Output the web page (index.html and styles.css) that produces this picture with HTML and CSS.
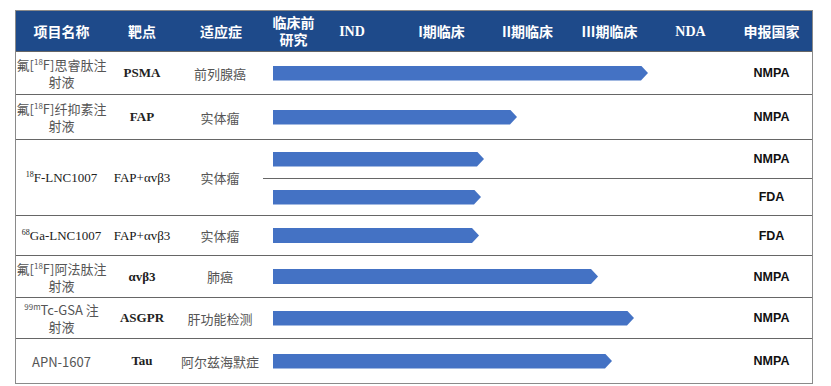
FILE: index.html
```html
<!DOCTYPE html>
<html lang="zh">
<head>
<meta charset="utf-8">
<link rel="stylesheet" href="styles.css">
</head>
<body>
<div class="table">
  <div class="head">
    <div class="h h1">项目名称</div>
    <div class="h h2">靶点</div>
    <div class="h h3">适应症</div>
    <div class="h p0"><span>临床前<br>研究</span></div>
    <div class="h p1 serif">IND</div>
    <div class="h p2">I期临床</div>
    <div class="h p3">II期临床</div>
    <div class="h p4">III期临床</div>
    <div class="h p5 serif">NDA</div>
    <div class="h h5">申报国家</div>
  </div>

  <div class="row r1">
    <div class="c c1 name"><span>氟[<sup>18</sup>F]思睿肽注<br>射液</span></div>
    <div class="c c2 tgt b">PSMA</div>
    <div class="c c3 ind">前列腺癌</div>
    <div class="prog"><div class="bar" style="width:375px"></div></div>
    <div class="c c5 ctry">NMPA</div>
  </div>

  <div class="row r2">
    <div class="c c1 name"><span>氟[<sup>18</sup>F]纤抑素注<br>射液</span></div>
    <div class="c c2 tgt b">FAP</div>
    <div class="c c3 ind">实体瘤</div>
    <div class="prog"><div class="bar" style="width:244px"></div></div>
    <div class="c c5 ctry">NMPA</div>
  </div>

  <div class="row r3">
    <div class="c c1 name serifname"><span><sup>18</sup>F-LNC1007</span></div>
    <div class="c c2 tgt">FAP+αvβ3</div>
    <div class="c c3 ind">实体瘤</div>
    <div class="split">
      <div class="sub">
        <div class="prog"><div class="bar" style="width:211px"></div></div>
        <div class="c c5 ctry">NMPA</div>
      </div>
      <div class="sub sub2">
        <div class="prog"><div class="bar" style="width:208px"></div></div>
        <div class="c c5 ctry">FDA</div>
      </div>
    </div>
  </div>

  <div class="row r4">
    <div class="c c1 name serifname"><span><sup>68</sup>Ga-LNC1007</span></div>
    <div class="c c2 tgt">FAP+αvβ3</div>
    <div class="c c3 ind">实体瘤</div>
    <div class="prog"><div class="bar" style="width:206px"></div></div>
    <div class="c c5 ctry">FDA</div>
  </div>

  <div class="row r5">
    <div class="c c1 name"><span>氟[<sup>18</sup>F]阿法肽注<br>射液</span></div>
    <div class="c c2 tgt b">αvβ3</div>
    <div class="c c3 ind">肺癌</div>
    <div class="prog"><div class="bar" style="width:325px"></div></div>
    <div class="c c5 ctry">NMPA</div>
  </div>

  <div class="row r6">
    <div class="c c1 name"><span><sup>99m</sup>Tc-GSA 注<br>射液</span></div>
    <div class="c c2 tgt b">ASGPR</div>
    <div class="c c3 ind">肝功能检测</div>
    <div class="prog"><div class="bar" style="width:361px"></div></div>
    <div class="c c5 ctry">NMPA</div>
  </div>

  <div class="row r7">
    <div class="c c1 name">APN-1607</div>
    <div class="c c2 tgt b">Tau</div>
    <div class="c c3 ind">阿尔兹海默症</div>
    <div class="prog"><div class="bar" style="width:339px"></div></div>
    <div class="c c5 ctry">NMPA</div>
  </div>
</div>
</body>
</html>
```

FILE: styles.css
```css
* { box-sizing: border-box; }
html, body { margin: 0; padding: 0; background: #fff; }
body { font-family: "Noto Sans CJK SC", "Noto Sans", sans-serif; }

.table {
  margin: 10px 0 0 15px;
  width: 798px;
  border: 1px solid #8a8a8a;
  display: flex;
  flex-direction: column;
}

.head {
  display: flex;
  height: 40px;
  background: #1e4a8a;
  color: #fff;
  font-weight: 700;
  font-size: 14px;
  line-height: 17px;
}
.h {
  display: flex;
  align-items: center;
  justify-content: center;
  text-align: center;
}
.h1 { width: 91px; }
.h2 { width: 70px; }
.h3 { width: 88px; }
.p0 { width: 57px; }
.p1 { width: 75px; padding-right: 15px; }
.p2 { width: 89px; }
.p3 { width: 83px; }
.p4 { width: 81px; }
.p5 { width: 81px; }
.h5 { width: 81px; }
.serif { font-family: "Liberation Serif", serif; font-size: 14px; }

.row {
  display: flex;
  border-top: 1px solid #666;
}
.r1 { height: 43px; }
.r2 { height: 45px; }
.r3 { height: 76px; }
.r4 { height: 40px; }
.r5 { height: 42px; }
.r6 { height: 41px; }
.r7 { height: 45px; }

.c {
  display: flex;
  align-items: center;
  justify-content: center;
  text-align: center;
}
.c1 { width: 91px; }
.c2 { width: 70px; }
.c3 { width: 86px; }
.c5 { width: 81px; }

.name {
  font-size: 13px;
  line-height: 17px;
  color: #555;
}
.name sup {
  font-size: 8px;
  line-height: 0;
  vertical-align: 5px;
}
.serifname {
  font-family: "Liberation Serif", serif;
  color: #222;
}
.tgt {
  font-family: "Liberation Serif", serif;
  font-size: 13px;
  color: #111;
}
.tgt.b { font-weight: 700; font-size: 13px; color: #222; }
.ind {
  font-size: 13px;
  color: #555;
}
.ctry {
  font-family: "Liberation Sans", Arial, sans-serif;
  font-weight: 700;
  font-size: 12.5px;
  color: #111;
}

.prog {
  width: 468px;
  display: flex;
  align-items: center;
  padding-left: 10px;
}
.bar {
  height: 15px;
  background: #4472c4;
  clip-path: polygon(0 0, calc(100% - 7px) 0, 100% 50%, calc(100% - 7px) 100%, 0 100%);
}

.split {
  display: flex;
  flex-direction: column;
  width: 549px;
}
.sub {
  display: flex;
  height: 38px;
}
.sub2 {
  border-top: 1px solid #666;
  height: 37px;
}
```
